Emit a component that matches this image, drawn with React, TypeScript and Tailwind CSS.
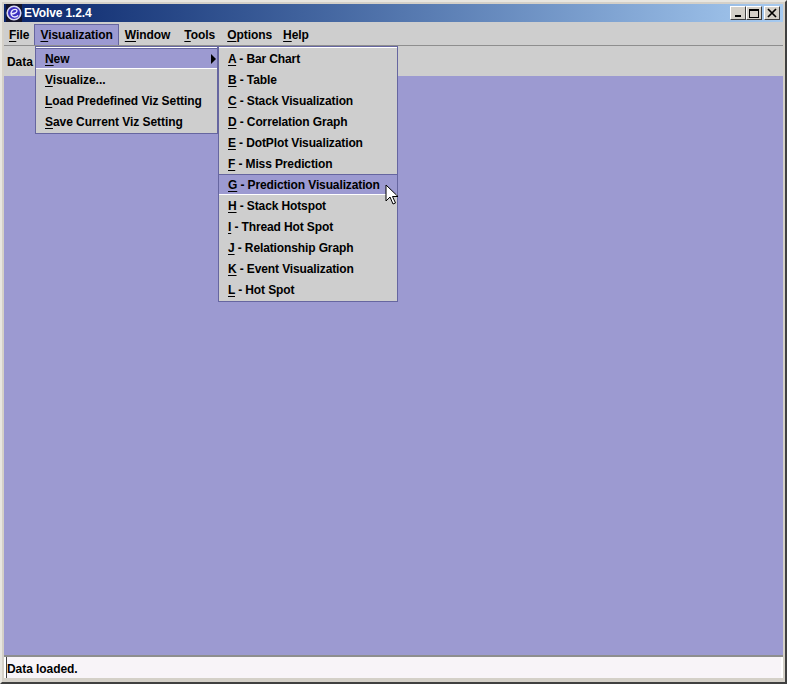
import { ReactNode } from 'react';

const MAIN_MENU = [
  { label: 'File', pad: 'px-[5px]' },
  { label: 'Visualization', pad: 'px-[5px] bg-[#9c9ad1] border border-[#6666a0] border-b-0' },
  { label: 'Window', pad: 'pl-[6px] pr-2' },
  { label: 'Tools', pad: 'px-[6px]' },
  { label: 'Options', pad: 'px-[6px]' },
  { label: 'Help', pad: 'pl-[5px]' },
];

const VIZ_ITEMS = [
  { key: 'V', rest: 'isualize...' },
  { key: 'L', rest: 'oad Predefined Viz Setting' },
  { key: 'S', rest: 'ave Current Viz Setting' },
];

const NEW_ITEMS = [
  ['A', ' - Bar Chart'],
  ['B', ' - Table'],
  ['C', ' - Stack Visualization'],
  ['D', ' - Correlation Graph'],
  ['E', ' - DotPlot Visualization'],
  ['F', ' - Miss Prediction'],
  ['G', ' - Prediction Visualization'],
  ['H', ' - Stack Hotspot'],
  ['I', ' - Thread Hot Spot'],
  ['J', ' - Relationship Graph'],
  ['K', ' - Event Visualization'],
  ['L', ' - Hot Spot'],
];

function Mnemonic({ children }: { children: ReactNode }) {
  return <span className="underline underline-offset-2 decoration-1">{children}</span>;
}

function WinButton({ children }: { children: ReactNode }) {
  return (
    <div className="w-4 h-[14px] bg-[#d4d0c8] border border-t-white border-l-white border-r-[#404040] border-b-[#404040] flex items-center justify-center">
      {children}
    </div>
  );
}

function MenuRow({ active, children }: { active?: boolean; children: ReactNode }) {
  return (
    <div className={`h-[21px] flex items-center whitespace-pre ${active ? 'bg-[#9c9ad1] border-t border-t-[#6666a0] border-b border-b-white' : ''}`}>
      {children}
    </div>
  );
}

export default function App() {
  return (
    <div className="relative w-[787px] h-[684px] bg-[#d4d0c8] border-t-2 border-l-2 border-t-[#e8e6e0] border-l-[#e8e6e0] border-r-2 border-b-2 border-r-[#404040] border-b-[#404040] p-0.5 overflow-hidden font-['Liberation_Sans',Arial,sans-serif] text-[12px] font-bold tracking-[-0.06px] text-[#000] flex flex-col">
      <div className="h-[18px] shrink-0 flex items-center justify-between bg-gradient-to-r from-[#0a246a] to-[#a6caf0] pr-[3px] pl-0.5">
        <div className="flex items-center gap-0.5">
          <svg width="16" height="18" viewBox="0 0 16 18">
            <rect width="16" height="18" fill="#14142a" />
            <circle cx="8" cy="9" r="6.8" fill="#3b2fc0" stroke="#d8d8f4" strokeWidth="1.6" />
            <path d="M4.5 9.6 C7 10.2 11 9 11 6.8 C11 5 7.6 4.8 5.8 7 C4 9.6 5.6 13 8.6 13 C10 13 11.3 12.4 12 11.3" fill="none" stroke="#e8e8ff" strokeWidth="1.4" />
          </svg>
          <span className="text-white text-[12px] tracking-[-0.14px]">EVolve 1.2.4</span>
        </div>
        <div className="flex items-center">
          <WinButton>
            <div className="w-1.5 h-0.5 bg-black mt-1.5" />
          </WinButton>
          <WinButton>
            <div className="w-[10px] h-[9px] border border-t-2 border-black" />
          </WinButton>
          <div className="w-0.5" />
          <WinButton>
            <svg width="10" height="10" viewBox="0 0 10 10">
              <path d="M1 1 L9 9 M9 1 L1 9" stroke="#000" strokeWidth="1.7" />
            </svg>
          </WinButton>
        </div>
      </div>

      <div className="h-6 shrink-0 bg-[#cecece] border-b border-b-[#8e8e8e] flex items-stretch pt-0.5">
        {MAIN_MENU.map((m) => (
          <div key={m.label} className={`flex items-center ${m.pad}`}>
            <span>
              <Mnemonic>{m.label[0]}</Mnemonic>
              {m.label.slice(1)}
            </span>
          </div>
        ))}
      </div>

      <div className="h-[30px] shrink-0 bg-[#cecece] flex items-center pl-[3px] pt-0.5">Data</div>

      <div className="flex-1 bg-[#9c9ad1] border-b-2 border-b-[#8e8e8e]" />

      <div className="h-[21px] shrink-0 bg-white pl-0.5 pr-0.5 mb-0.5">
        <div className="h-full bg-[#f8f4f8] border-l border-l-[#404040] flex items-center pt-0.5">Data loaded.</div>
      </div>

      <div className="absolute left-[33px] top-[44px] w-[183px] h-[88px] bg-[#cecece] border border-[#6666a0]">
        <div className="h-px bg-white" />
        <MenuRow active>
          <div className="flex-1 pl-[9px] flex items-center justify-between pr-px">
            <span>
              <Mnemonic>N</Mnemonic>ew
            </span>
            <svg width="5" height="10" viewBox="0 0 5 10">
              <path d="M0 0 L5 5 L0 10 Z" fill="#000" />
            </svg>
          </div>
        </MenuRow>
        {VIZ_ITEMS.map((it) => (
          <MenuRow key={it.key}>
            <span className="pl-[9px]">
              <Mnemonic>{it.key}</Mnemonic>
              {it.rest}
            </span>
          </MenuRow>
        ))}
      </div>

      <div className="absolute left-[216px] top-[44px] w-[180px] h-[256px] bg-[#cecece] border border-[#6666a0] tracking-[-0.12px]">
        <div className="h-px bg-white" />
        {NEW_ITEMS.map(([k, rest]) => (
          <MenuRow key={k} active={k === 'G'}>
            <span className="pl-[9px]">
              <Mnemonic>{k}</Mnemonic>
              {rest}
            </span>
          </MenuRow>
        ))}
      </div>

      <svg className="absolute left-[383px] top-[182px]" width="14" height="22" viewBox="0 0 14 22">
        <path d="M1 1 L1 17 L5 13 L8 20 L10.5 19 L7.5 12.5 L13 12.5 Z" fill="#fff" stroke="#000" strokeWidth="1" />
      </svg>
    </div>
  );
}
